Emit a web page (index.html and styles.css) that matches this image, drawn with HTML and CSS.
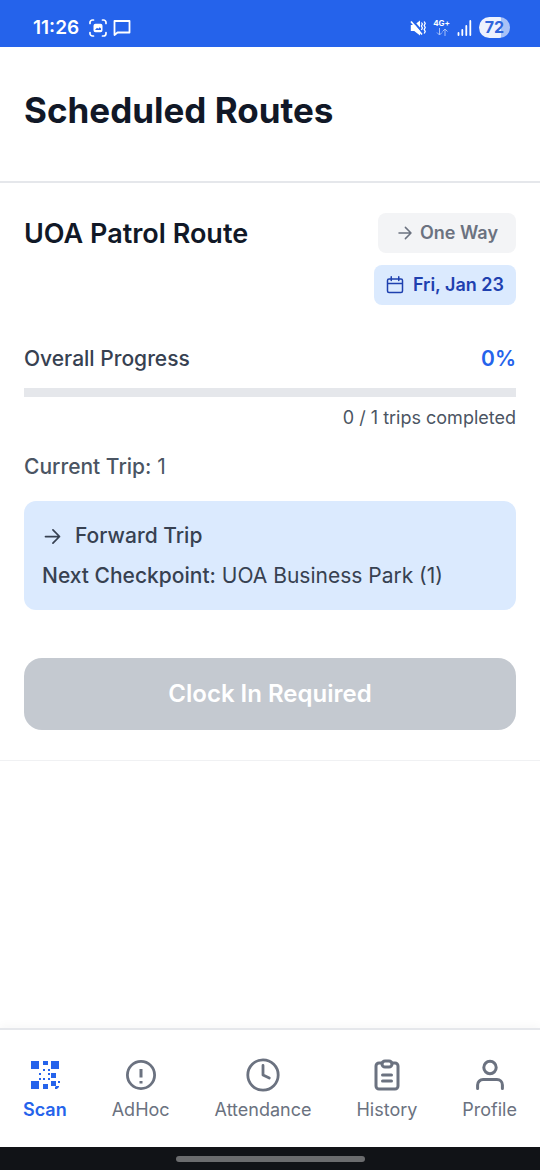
FILE: index.html
```html
<!DOCTYPE html>
<html lang="en">
<head>
<meta charset="utf-8">
<meta name="viewport" content="width=device-width, initial-scale=1">
<title>Scheduled Routes</title>
<link rel="stylesheet" href="styles.css">
</head>
<body>
<div class="app">
  <div class="status">
    <div class="status-group">
      <span class="clock">11:26</span>
      <svg class="icon-capture" viewBox="0 0 18 18" aria-hidden="true"><g fill="none" stroke="currentColor" stroke-width="1.7" stroke-linecap="round"><path d="M1 4.500V3.500A2.500 2.500 0 0 1 3.500 1H4.500M13.500 1h1A2.500 2.500 0 0 1 17 3.500v1M17 13.500v1a2.500 2.500 0 0 1-2.500 2.500h-1M4.500 17h-1A2.500 2.500 0 0 1 1 14.500v-1"/></g><path fill="currentColor" fill-rule="evenodd" d="M6.500 4.800h5a2 2 0 0 1 2 2v4.400a2 2 0 0 1-2 2h-5a2 2 0 0 1-2-2V6.800a2 2 0 0 1 2-2zM6 11l2-2.200 1.300 1 1.400-1.600L12 9.500V11z"/></svg>
      <svg class="icon-message" viewBox="0 0 18 18" aria-hidden="true"><path d="M1.500 2h15v11.500h-12l-3 2.500z" fill="none" stroke="currentColor" stroke-width="1.800" stroke-linejoin="round"/></svg>
    </div>
    <div class="status-group status-right">
      <svg class="icon-mute" viewBox="0 0 16 18" aria-hidden="true"><path fill="currentColor" d="M.8 6h3.400L10 1.500v15L4.200 12H.8z"/><path d="M2.500 1.500l12 14" stroke="#2563eb" stroke-width="2"/><path d="M1 2.500l11 13" stroke="currentColor" stroke-width="1.700"/><path d="M11.400 3.500l1 1.500-1 2 1 2-1 2M14.200 2.500l1 2-1 2 1 2-1 2 1 2-1 2" fill="none" stroke="currentColor" stroke-width="1.300"/></svg>
      <span class="network"><span>4G+</span><svg class="icon-data" viewBox="0 0 12 8" aria-hidden="true"><path d="M3.500 0v7M1 4.500L3.500 7 6 4.500M9 8V1M6.500 3.500L9 1l2.500 2.500" fill="none" stroke="currentColor"/></svg></span>
      <svg class="icon-signal" viewBox="0 0 15 16" aria-hidden="true"><path d="M1.500 13v2M5.300 10v5M9.300 6v9M13.300 1v14" stroke="currentColor" stroke-width="1.800" stroke-linecap="round"/></svg>
      <span class="battery">72</span>
    </div>
  </div>

  <header class="header"><h1 class="title">Scheduled Routes</h1></header>

  <main class="main">
    <section class="route">
      <div class="route-head">
        <h2 class="route-name">UOA Patrol Route</h2>
        <div class="tags">
          <span class="tag tag-way"><svg class="icon-small" viewBox="0 0 24 24" aria-hidden="true"><path class="line" d="M4 12h16M12.500 4.500L20 12l-7.500 7.500"/></svg>One Way</span>
          <span class="tag tag-date"><svg class="icon-small" viewBox="0 0 24 24" aria-hidden="true"><path class="line" d="M4 4h16a2 2 0 0 1 2 2v14a2 2 0 0 1-2 2H4a2 2 0 0 1-2-2V6a2 2 0 0 1 2-2zM7 1v5M17 1v5M2 10h20"/></svg>Fri, Jan 23</span>
        </div>
      </div>
      <div class="progress-head"><span id="progress-label">Overall Progress</span><strong class="percent">0%</strong></div>
      <div class="track" role="progressbar" aria-labelledby="progress-label" aria-valuenow="0" aria-valuemin="0" aria-valuemax="100"></div>
      <p class="completed">0 / 1 trips completed</p>
      <p class="current"><span class="medium">Current Trip:</span> 1</p>
      <div class="trip">
        <p class="trip-line medium"><svg class="icon-arrow" viewBox="0 0 24 24" aria-hidden="true"><path class="line" d="M4 12h16M12.500 4.500L20 12l-7.500 7.500"/></svg>Forward Trip</p>
        <p class="trip-line"><span><span class="medium">Next Checkpoint:</span> UOA Business Park (1)</span></p>
      </div>
      <button class="action" type="button" disabled>Clock In Required</button>
    </section>
  </main>

  <nav class="tabs" aria-label="Main">
    <a class="tab tab-active" href="#scan" aria-current="page"><svg class="icon-tab" viewBox="0 0 36 36" aria-hidden="true"><path fill="currentColor" d="M4 4h8v8H4zM16 4h5v4h-5zM24 4h8v8h-8zM4 24h8v8H4zM24 16h5v5h-5zM16 27h5v5h-5zM24 24h5v5h-5zM16 12h2v2h-2zM21 12h2v2h-2zM12 16h2v2h-2zM21 16h2v2h-2zM12 21h2v2h-2zM16 21h2v2h-2zM21 21h2v2h-2zM31 24h2v2h-2zM29 29h3v1l-2 2h-2v-2z"/></svg>Scan</a>
    <a class="tab" href="#adhoc"><svg class="icon-tab" viewBox="0 0 36 36" aria-hidden="true"><g fill="none" stroke="currentColor" stroke-width="2.800"><circle cx="18" cy="18" r="13.600"/><path stroke-width="3" d="M18 12v8.500M18 24v2.500"/></g></svg>AdHoc</a>
    <a class="tab" href="#attendance"><svg class="icon-tab" viewBox="0 0 36 36" aria-hidden="true"><g fill="none" stroke="currentColor" stroke-width="2.800" stroke-linecap="round" stroke-linejoin="round"><circle cx="18" cy="18" r="15.200"/><path d="M18 8.500V18l6.300 3"/></g></svg>Attendance</a>
    <a class="tab" href="#history"><svg class="icon-tab" viewBox="0 0 36 36" aria-hidden="true"><g fill="none" stroke="currentColor" stroke-width="3" stroke-linecap="round" stroke-linejoin="round"><path d="M13 6H10a3 3 0 0 0-3 3v20a3 3 0 0 0 3 3h16a3 3 0 0 0 3-3V9a3 3 0 0 0-3-3h-3"/><rect x="13" y="4" width="10" height="6" rx="3"/><path d="M13.500 18h9M13.500 24h9"/></g></svg>History</a>
    <a class="tab" href="#profile"><svg class="icon-tab" viewBox="0 0 36 36" aria-hidden="true"><g fill="none" stroke="currentColor" stroke-width="3" stroke-linecap="round"><circle cx="18" cy="10.500" r="6.200"/><path d="M5.600 31.500V28a5.500 5.500 0 0 1 5.500-5.500h13.800a5.500 5.500 0 0 1 5.500 5.500v3.500"/></g></svg>Profile</a>
  </nav>
  <div class="system-bar"><span class="handle"></span></div>
</div>
</body>
</html>
```

FILE: styles.css
```css
* { box-sizing: border-box; }
body { margin: 0; background: #fff; color: #374151; font-family: Inter, "Liberation Sans", sans-serif; font-size: 21px; line-height: 30px; }
h1, h2, p { margin: 0; }
svg { display: block; flex: none; }
.app { min-height: 100vh; display: flex; flex-direction: column; }
.line { fill: none; stroke: currentColor; stroke-width: 2; stroke-linecap: round; stroke-linejoin: round; }
.medium { font-weight: 500; }

.status { display: flex; justify-content: space-between; align-items: center; padding: 9px 30px 1px 33px; height: 47px; background: #2563eb; color: #fff; }
.status-group { display: flex; align-items: center; gap: 6px; }
.status-right { gap: 7px; }
.clock { font-size: 19px; font-weight: 600; margin-right: 4px; }
.icon-capture, .icon-message { width: 18px; height: 18px; }
.icon-mute { width: 16px; height: 18px; }
.network { display: flex; flex-direction: column; align-items: center; font-size: 8px; line-height: 9px; font-weight: 700; }
.icon-data { width: 12px; height: 8px; opacity: .6; }
.icon-signal { width: 15px; height: 16px; }
.battery { width: 31px; height: 21px; border-radius: 11px; background: linear-gradient(90deg, #edf2fe 72%, #a8c1f7 72%); color: #2f65dc; font-size: 16px; line-height: 21px; font-weight: 700; text-align: center; }

.header { padding: 42px 24px 50px; border-bottom: 2px solid #e5e7eb; }
.title { color: #111827; font-size: 35px; line-height: 42px; font-weight: 700; }

.main { flex: 1; }
.route { padding: 30px 24px; border-bottom: 1px solid #f0f1f3; }
.route-head { display: flex; justify-content: space-between; align-items: flex-start; }
.route-name { color: #111827; font-size: 27px; line-height: 42px; font-weight: 600; }
.tags { display: flex; flex-direction: column; align-items: flex-end; gap: 12px; }
.tag { display: flex; align-items: center; height: 40px; border-radius: 8px; font-size: 18px; font-weight: 600; }
.tag-way { gap: 6px; padding: 0 18px; background: #f3f4f6; color: #6b7280; }
.tag-date { gap: 9px; padding: 0 12px; background: #dbeafe; color: #1e40af; }
.icon-small { width: 18px; height: 18px; }
.progress-head { display: flex; justify-content: space-between; margin-top: 39px; font-weight: 500; }
.percent { color: #2563eb; font-weight: 600; }
.track { height: 9px; margin-top: 14px; background: #e5e7eb; }
.completed { margin-top: 6px; text-align: right; font-size: 18px; color: #4b5563; }
.current { margin-top: 19px; color: #4b5563; }
.trip { display: flex; flex-direction: column; gap: 10px; margin-top: 19px; padding: 20px 18px 19px; border-radius: 12px; background: #dbeafe; }
.trip-line { display: flex; align-items: center; gap: 12px; }
.icon-arrow { width: 21px; height: 21px; }
.action { display: block; width: 100%; height: 72px; margin-top: 48px; border: 0; border-radius: 18px; background: #c4c9d0; color: #fff; font: inherit; font-size: 24px; font-weight: 600; }

.tabs { display: flex; justify-content: space-between; padding: 27px 23px 24px; border-top: 2px solid #e5e7eb; box-shadow: 0 -3px 8px rgba(0, 0, 0, .03); }
.tab { display: flex; flex-direction: column; align-items: center; gap: 4px; color: #6b7280; font-size: 18px; line-height: 26px; text-decoration: none; }
.tab-active { color: #2563eb; font-weight: 600; }
.icon-tab { width: 36px; height: 36px; }
.system-bar { display: flex; justify-content: center; padding: 9px 0 8px; background: #111317; }
.handle { width: 35%; height: 6px; border-radius: 3px; background: #6b6c6e; }
```
